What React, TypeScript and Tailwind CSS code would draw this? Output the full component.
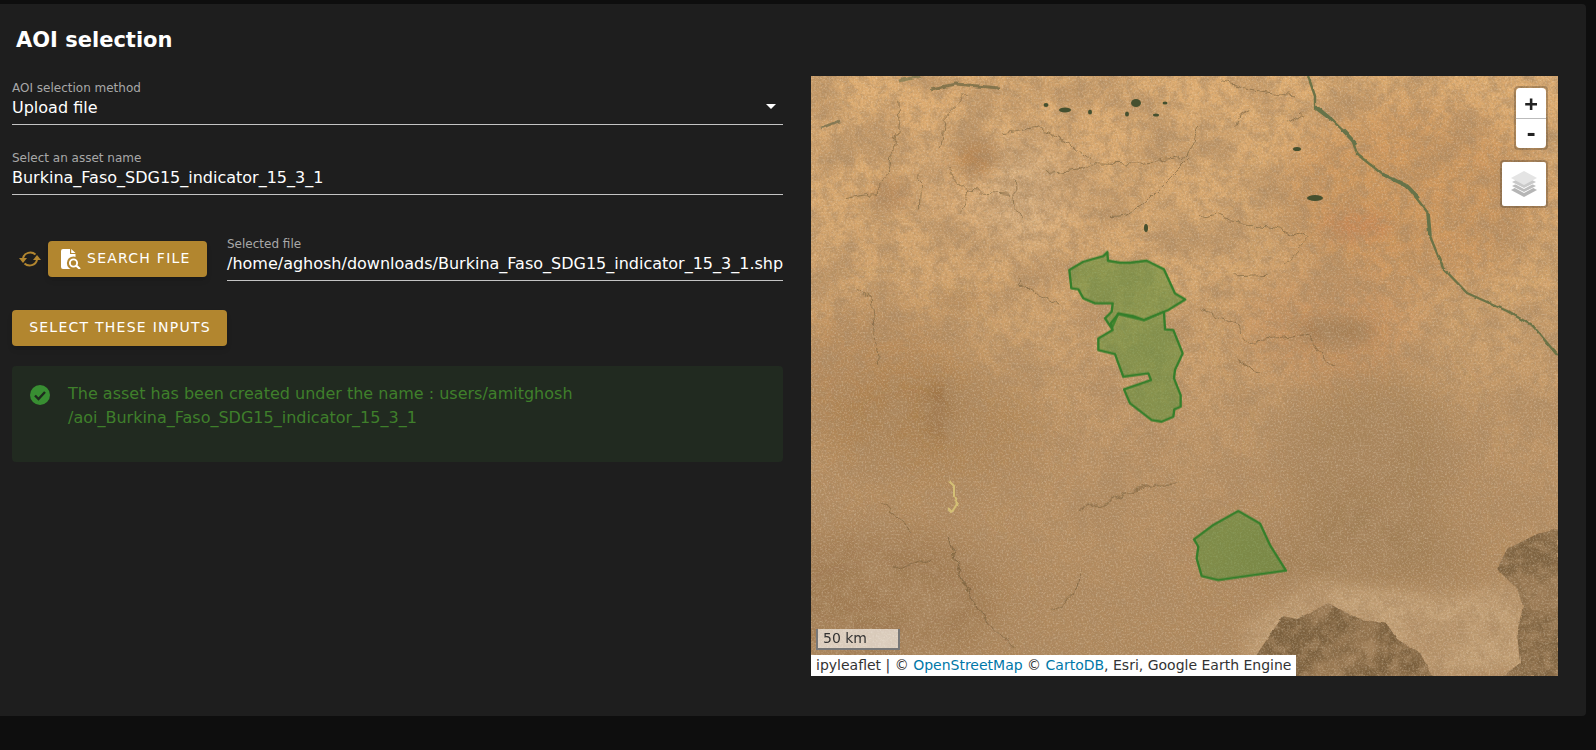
const polygons = [
  '88,120 130,95 190,78 202,66 204,92 240,98 270,98 320,92 372,118 405,190 436,208 385,240 372,245 312,270 280,258 235,250 215,295 195,265 215,245 218,220 165,220 130,205 115,178 94,175',
  '235,252 312,270 372,245 375,298 400,300 428,370 405,420 402,445 422,495 422,530 403,538 400,560 365,575 335,570 270,520 252,478 333,450 325,430 250,440 235,400 225,372 175,360 175,325 218,300 212,280',
  '462,928 520,885 595,843 660,880 690,945 738,1022 640,1035 535,1050 485,1038 470,985 475,950',
];

const veins = [
  'M260 70 L265 150 L250 200 L235 300 L190 350 L100 365',
  'M470 60 L400 130 L385 220',
  'M580 170 L680 150 L770 200 L840 260 L1000 265 L1130 240 L1160 150',
  'M1130 250 L1060 320 L1000 380 L940 420 L900 425',
  'M610 310 L615 400 L630 430',
  'M330 290 L325 400',
  'M470 345 L600 355',
  'M410 285 L470 345 L450 410',
  'M700 290 L800 280 L850 265',
  'M140 640 L180 660 L190 780 L200 860',
  'M620 610 L680 660 L760 690',
];

const lowerVeins = [
  'M810 400 L900 375 L960 345 L1040 325 L1090 320',
  'M415 480 L440 580 L490 680 L540 750 L610 820',
  'M250 580 L360 555',
  'M810 580 L790 660 L720 705',
  'M210 380 L250 410 L300 470',
];

const rightVeins = [
  'M0 705 L100 740 L150 800 L330 780 L370 850 L410 870',
  'M0 425 L50 415 L90 435 L160 440',
  'M160 450 L260 465 L330 490 L250 570',
  'M110 160 L120 115 L150 100',
  'M260 145 L310 115',
  'M60 20 L150 40 L280 60',
  'M110 850 L170 890',
  'M100 600 L200 595',
];

function SatelliteMap() {
  return (
    <svg viewBox="0 0 747 600" className="block h-full w-full">
      <defs>
        <linearGradient id="ground" x1="0" y1="0" x2="0" y2="1">
          <stop offset="0" stopColor="#e0ae72" />
          <stop offset="0.35" stopColor="#d4a56e" />
          <stop offset="0.65" stopColor="#bb9265" />
          <stop offset="1" stopColor="#ae885d" />
        </linearGradient>
        <filter id="soft" x="-50%" y="-50%" width="200%" height="200%">
          <feGaussianBlur stdDeviation="22" />
        </filter>
        <filter id="softSmall" x="-50%" y="-50%" width="200%" height="200%">
          <feGaussianBlur stdDeviation="8" />
        </filter>
        <filter id="blotches" x="0" y="0" width="100%" height="100%">
          <feTurbulence type="fractalNoise" baseFrequency="0.022" numOctaves="6" seed="11" />
          <feColorMatrix values="0 0 0 0 0.42  0 0 0 0 0.25  0 0 0 0 0.12  3.4 0 0 0 -1.4" />
        </filter>
        <filter id="mottle" x="0" y="0" width="100%" height="100%">
          <feTurbulence type="fractalNoise" baseFrequency="0.09" numOctaves="4" seed="31" />
          <feColorMatrix values="0 0 0 0 0.42  0 0 0 0 0.26  0 0 0 0 0.13  3.6 0 0 0 -1.55" />
        </filter>
        <filter id="speckleDark" x="0" y="0" width="100%" height="100%">
          <feTurbulence type="fractalNoise" baseFrequency="0.38" numOctaves="3" seed="4" />
          <feColorMatrix values="0 0 0 0 0.35  0 0 0 0 0.22  0 0 0 0 0.1  2 0 0 0 -0.85" />
        </filter>
        <filter id="speckleLight" x="0" y="0" width="100%" height="100%">
          <feTurbulence type="fractalNoise" baseFrequency="0.55" numOctaves="3" seed="23" />
          <feColorMatrix values="0 0 0 0 0.95  0 0 0 0 0.84  0 0 0 0 0.68  0 2.4 0 0 -1.1" />
        </filter>
        <filter id="rough" filterUnits="userSpaceOnUse" x="0" y="0" width="747" height="600">
          <feTurbulence type="fractalNoise" baseFrequency="0.07" numOctaves="3" seed="7" result="wobble" />
          <feDisplacementMap in="SourceGraphic" in2="wobble" scale="12" xChannelSelector="R" yChannelSelector="G" />
        </filter>
        <filter id="jagged" filterUnits="userSpaceOnUse" x="0" y="0" width="747" height="600">
          <feTurbulence type="fractalNoise" baseFrequency="0.12" numOctaves="2" seed="3" result="wobble" />
          <feDisplacementMap in="SourceGraphic" in2="wobble" scale="3" xChannelSelector="R" yChannelSelector="G" />
        </filter>
      </defs>

      <rect width="747" height="600" fill="url(#ground)" />

      {/* broad colour areas */}
      <g filter="url(#soft)">
        <ellipse cx="600" cy="120" rx="130" ry="90" fill="#c98a50" opacity="0.55" />
        <ellipse cx="520" cy="250" rx="90" ry="50" fill="#c58a58" opacity="0.5" />
        <ellipse cx="60" cy="300" rx="100" ry="70" fill="#a87a4c" opacity="0.45" />
        <ellipse cx="120" cy="350" rx="110" ry="60" fill="#9f7548" opacity="0.45" />
        <ellipse cx="70" cy="520" rx="120" ry="70" fill="#8f6c46" opacity="0.5" />
        <ellipse cx="560" cy="380" rx="90" ry="90" fill="#94764f" opacity="0.5" />
        <ellipse cx="540" cy="480" rx="130" ry="30" fill="#8d7049" opacity="0.5" />
        <ellipse cx="190" cy="110" rx="110" ry="60" fill="#d8ab78" opacity="0.55" />
        <ellipse cx="210" cy="120" rx="30" ry="50" fill="#ead0a8" opacity="0.35" />
      </g>
      <g filter="url(#softSmall)">
        <ellipse cx="165" cy="82" rx="20" ry="18" fill="#a4703f" opacity="0.65" />
        <ellipse cx="80" cy="118" rx="18" ry="14" fill="#ac7647" opacity="0.5" />
        <ellipse cx="128" cy="335" rx="14" ry="30" fill="#7d5a35" opacity="0.35" />
        <ellipse cx="150" cy="225" rx="25" ry="8" fill="#a37a50" opacity="0.5" />
        <ellipse cx="525" cy="255" rx="40" ry="12" fill="#7d6240" opacity="0.55" />
        <ellipse cx="545" cy="150" rx="35" ry="14" fill="#c27a50" opacity="0.5" />
      </g>

      {/* pale plain and dark patches in the south east */}
      <path d="M430 550 L500 505 L640 520 L712 505 L720 600 L440 600 Z" fill="#c7a57b" filter="url(#softSmall)" opacity="0.85" />
      <path d="M446 578 L472 540 L486 543 L517 527 L546 542 L576 548 L586 563 L609 577 L622 600 L446 600 Z" fill="#7a5f3e" filter="url(#jagged)" />
      <path d="M747 453 L726 458 L696 473 L686 493 L706 513 L712 530 L706 557 L709 587 L692 600 L747 600 Z" fill="#7d6241" filter="url(#jagged)" />

      <rect width="747" height="600" filter="url(#blotches)" opacity="0.55" />
      <rect width="747" height="600" filter="url(#mottle)" opacity="0.5" />
      <rect width="747" height="600" filter="url(#speckleDark)" opacity="0.45" />
      <rect width="747" height="600" filter="url(#speckleLight)" opacity="0.28" />

      {/* drainage lines */}
      <g filter="url(#rough)">
        <g transform="scale(0.3333)" fill="none" stroke="#6d5a38" strokeWidth="3" opacity="0.55">
          {veins.map((d) => (
            <path key={d} d={d} />
          ))}
        </g>
        <g transform="translate(0 300) scale(0.3333)" fill="none" stroke="#63502f" strokeWidth="3" opacity="0.6">
          {lowerVeins.map((d) => (
            <path key={d} d={d} />
          ))}
        </g>
        <g transform="translate(389 0) scale(0.3333)" fill="none" stroke="#6d5a38" strokeWidth="3" opacity="0.55">
          {rightVeins.map((d) => (
            <path key={d} d={d} />
          ))}
        </g>
      </g>
      <g filter="url(#jagged)">
        <path
          d="M138 405 L143 410 L143 420 L146 428 L141 436 L137 432"
          fill="none"
          stroke="#d4bf74"
          strokeWidth="2"
        />

        {/* river */}
        <path
          d="M497 0 L504 20 L504 32 L522 45 L541 63 L546 78 L571 98 L596 110 L617 137 L619 160 L632 192 L656 217 L696 235 L722 250 L747 280"
          fill="none"
          stroke="#6c7346"
          strokeWidth="2.4"
          strokeLinejoin="round"
        />
        <path d="M504 30 L522 45 M532 54 L545 68 M571 98 L596 110 L608 122 M617 137 L619 160" fill="none" stroke="#66734a" strokeWidth="3.6" />

        {/* ridges along the top */}
        <path d="M120 13 L145 8 L188 12" fill="none" stroke="#6a6440" strokeWidth="3" opacity="0.7" />
        <path d="M88 5 L110 0" fill="none" stroke="#7b7750" strokeWidth="3" opacity="0.7" />
        <path d="M10 52 L28 45" fill="none" stroke="#6a6a48" strokeWidth="2.5" opacity="0.7" />
      </g>

      {/* ponds */}
      <g fill="#45502f">
        <ellipse cx="325" cy="27" rx="5" ry="4" />
        <ellipse cx="254" cy="34" rx="6" ry="2.5" />
        <ellipse cx="279" cy="36" rx="2" ry="2.5" />
        <ellipse cx="316" cy="38" rx="2" ry="2.5" />
        <ellipse cx="345" cy="39" rx="3" ry="1.5" />
        <ellipse cx="354" cy="27" rx="2.5" ry="1.5" />
        <ellipse cx="235" cy="29" rx="2.5" ry="2" />
        <ellipse cx="335" cy="152" rx="2" ry="4" />
        <ellipse cx="504" cy="122" rx="8" ry="3" />
        <ellipse cx="486" cy="73" rx="4" ry="2" />
      </g>

      {/* AOI polygons */}
      <g
        transform="translate(229 154) scale(0.3333)"
        fill="#4a8f30"
        fillOpacity="0.47"
        stroke="#357f2b"
        strokeWidth="7"
        strokeLinejoin="round"
      >
        {polygons.map((points) => (
          <polygon key={points} points={points} />
        ))}
      </g>
    </svg>
  );
}

function Field({ label, value }: { label: string; value: string }) {
  return (
    <div className="min-w-0 flex-1 border-b border-[#c4c4c4] pb-[5px]">
      <div className="text-xs leading-[17px] text-[#a8a8a8]">{label}</div>
      <div className="whitespace-nowrap text-base leading-[22px] text-white">{value}</div>
    </div>
  );
}

function LayersIcon() {
  return (
    <svg viewBox="0 0 26 26" className="h-[26px] w-[26px]">
      <polygon points="13,12 26,19 13,26 0,19" fill="#b5b5b5" />
      <polygon points="13,8 26,15 13,22 0,15" fill="#fff" />
      <polygon points="13,9 25,15 13,21 1,15" fill="#bdbdbd" />
      <polygon points="13,4 26,11 13,18 0,11" fill="#fff" />
      <polygon points="13,5 25,11 13,17 1,11" fill="#c9c9c9" />
      <polygon points="13,0 26,7 13,14 0,7" fill="#e4e4e4" />
    </svg>
  );
}

export default function App() {
  return (
    <div className="h-[750px] overflow-hidden bg-[#0e0e0e] pt-1 font-['DejaVu_Sans',sans-serif]">
      <div className="h-[712px] w-[1586px] rounded-r bg-[#1e1e1e]">
        <h1 className="px-4 pt-[22px] pb-[22px] text-[21px] leading-7 font-bold text-white">AOI selection</h1>

        <div className="flex items-start gap-7 pl-3">
          <div className="flex w-[771px] flex-col pt-1">
            <div className="relative">
              <Field label="AOI selection method" value="Upload file" />
              <svg viewBox="0 0 10 5" className="absolute top-6 right-[7px] h-[5px] w-[10px]">
                <polygon points="0,0 10,0 5,5" fill="#fff" />
              </svg>
            </div>
            <div className="mt-[25px]">
              <Field label="Select an asset name" value="Burkina_Faso_SDG15_indicator_15_3_1" />
            </div>

            <div className="mt-[41px] flex items-center">
              <svg viewBox="0 0 22 18" className="ml-[7px] h-[18px] w-[22px]" fill="none">
                <path d="M4 8 A7.5 7 0 0 1 16.5 4.5" stroke="#b2862f" strokeWidth="2" />
                <path d="M18 10 A7.5 7 0 0 1 5.5 13.5" stroke="#b2862f" strokeWidth="2" />
                <polygon points="0,8 8,8 4,13" fill="#b2862f" />
                <polygon points="14,10 22,10 18,5" fill="#b2862f" />
              </svg>
              <button className="ml-[7px] flex h-9 w-[159px] items-center rounded bg-[#b2862f] pb-0.5 pl-[13px] text-sm tracking-[1.25px] text-white shadow-md">
                <svg viewBox="0 0 20 20" className="mt-0.5 mr-[6px] h-5 w-5">
                  <path d="M2 0 H9 V5 H14.5 V20 H2 A2 2 0 0 1 0 18 V2 A2 2 0 0 1 2 0 Z" fill="#fff" />
                  <polygon points="10.2,0 14.5,4 10.2,4" fill="#fff" />
                  <circle cx="12.5" cy="14" r="6.6" fill="#b2862f" />
                  <circle cx="12.5" cy="14" r="3.6" fill="none" stroke="#fff" strokeWidth="1.9" />
                  <path d="M15.4 16.8 L19 20" stroke="#fff" strokeWidth="2.2" />
                </svg>
                SEARCH FILE
              </button>
              <div className="ml-5 flex min-w-0 flex-1">
                <Field label="Selected file" value="/home/aghosh/downloads/Burkina_Faso_SDG15_indicator_15_3_1.shp" />
              </div>
            </div>

            <button className="mt-[29px] h-9 w-[215px] rounded bg-[#b2862f] pb-0.5 pl-px text-sm tracking-[1.25px] text-white shadow-md">
              SELECT THESE INPUTS
            </button>

            <div className="mt-5 flex h-24 gap-[18px] rounded bg-[#212a20] py-4 pl-[18px]">
              <svg viewBox="0 0 20 20" className="mt-[3px] h-5 w-5 shrink-0">
                <circle cx="10" cy="10" r="10" fill="#388e32" />
                <path d="M5 10.5 L8.5 14 L15 7" fill="none" stroke="#1e2a1e" strokeWidth="2.4" />
              </svg>
              <p className="text-base leading-6 text-[#3f7f2b]">
                The asset has been created under the name : users/amitghosh
                <br />
                /aoi_Burkina_Faso_SDG15_indicator_15_3_1
              </p>
            </div>
          </div>

          <div className="relative h-[600px] w-[747px] overflow-hidden">
            <SatelliteMap />

            <div className="absolute top-[10px] right-[10px] w-[34px] overflow-hidden rounded border-2 border-black/20 bg-clip-padding font-['DejaVu_Sans_Mono',monospace] text-[#222]">
              <div className="flex h-[30px] items-center justify-center rounded-t bg-white text-[22px] font-bold">+</div>
              <div className="flex h-[30px] items-center justify-center rounded-b border-t border-[#bbb] bg-white text-[22px] font-bold">-</div>
            </div>

            <div className="absolute top-[84px] right-[10px] flex h-[48px] w-[48px] items-center justify-center rounded border-2 border-black/20 bg-white bg-clip-padding">
              <LayersIcon />
            </div>

            <div className="absolute bottom-[26px] left-[5px] h-[21px] w-[84px] border-2 border-t-0 border-[#777] bg-white/60 pl-[5px] text-sm leading-[18px] text-[#333]">
              50 km
            </div>

            <div className="absolute bottom-0 left-0 h-[21px] bg-white px-[5px] text-sm leading-[21px] whitespace-nowrap text-[#333]">
              ipyleaflet | © <span className="text-[#0078a8]">OpenStreetMap</span> © <span className="text-[#0078a8]">CartoDB</span>, Esri, Google Earth Engine
            </div>
          </div>
        </div>
      </div>
    </div>
  );
}
